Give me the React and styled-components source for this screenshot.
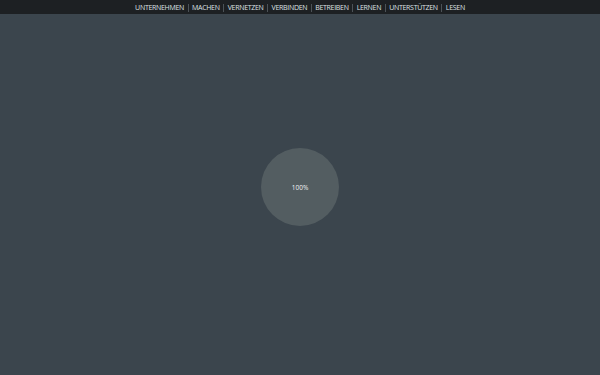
import React from 'react'
import styled, { createGlobalStyle } from 'styled-components'

const GlobalStyle = createGlobalStyle`
  html, body, #root { margin: 0; padding: 0; height: 100%; }
  body { background: #3b454d; font-family: "Open Sans", "Liberation Sans", sans-serif; }
`

const items = ['UNTERNEHMEN', 'MACHEN', 'VERNETZEN', 'VERBINDEN', 'BETREIBEN', 'LERNEN', 'UNTERSTÜTZEN', 'LESEN']

export default function App() {
  return (
    <Page>
      <GlobalStyle />
      <TopBar>
        {items.map((item, i) => (
          <React.Fragment key={item}>
            {i > 0 && <Sep />}
            <NavLink>{item}</NavLink>
          </React.Fragment>
        ))}
      </TopBar>
      <Stage>
        <Loader>100%</Loader>
      </Stage>
    </Page>
  )
}

const Page = styled.div`
  display: flex;
  flex-direction: column;
  height: 375px;
  background: #3b454d;
`

const TopBar = styled.nav`
  height: 14px;
  background: #1d2023;
  display: flex;
  align-items: center;
  justify-content: center;
  gap: 3.5px;
  padding-top: 1px;
  box-sizing: border-box;
`

const NavLink = styled.span`
  color: #dfe2e4;
  font-size: 7px;
  font-weight: 400;
  letter-spacing: -0.3px;
  line-height: 1;
`

const Sep = styled.span`
  width: 1px;
  height: 8px;
  background: #4c5257;
`

const Stage = styled.div`
  flex: 1;
  display: flex;
  align-items: center;
  justify-content: center;
  padding-bottom: 15px;
`

const Loader = styled.div`
  width: 78px;
  height: 78px;
  border-radius: 50%;
  background: #535d61;
  color: #f0f2f3;
  font-size: 6.5px;
  display: flex;
  align-items: center;
  justify-content: center;
`
